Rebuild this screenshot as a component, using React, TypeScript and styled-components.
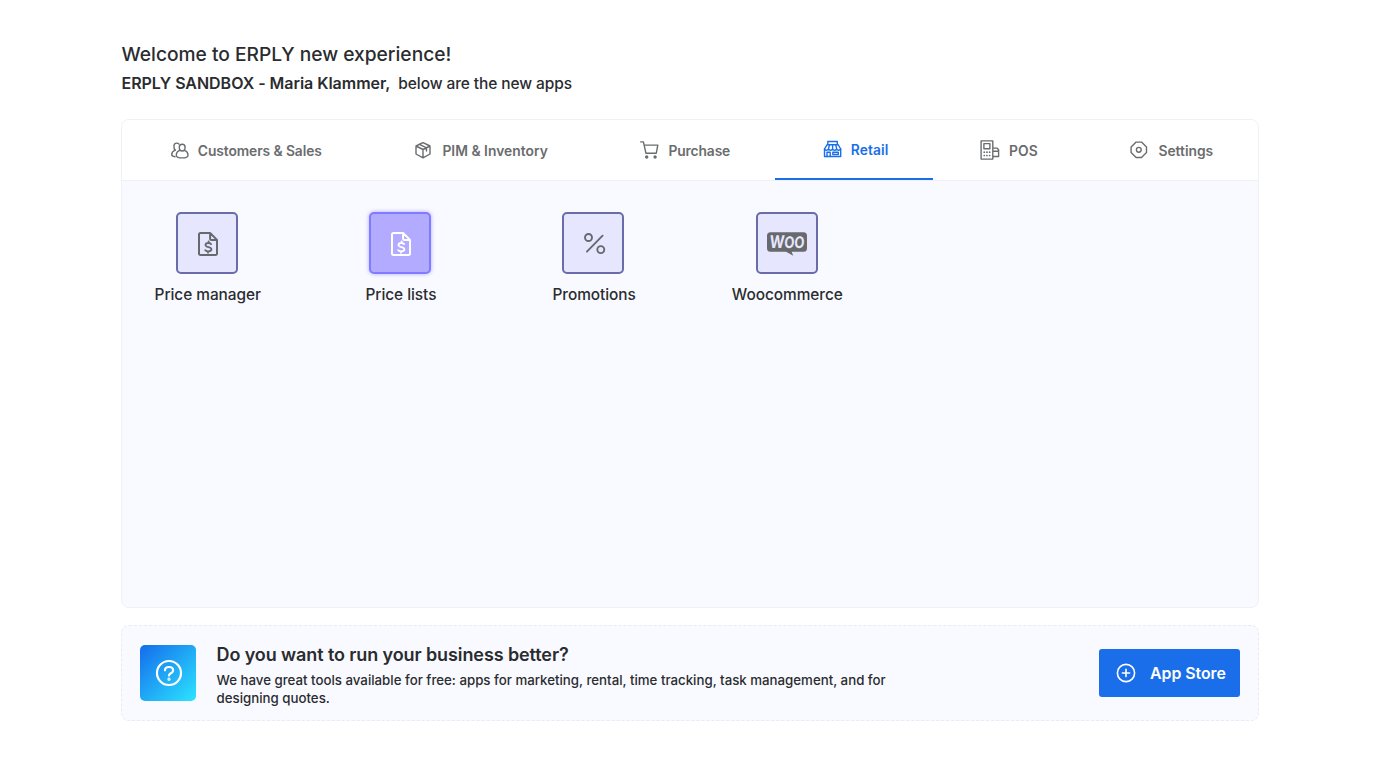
import React from 'react';
import styled, { createGlobalStyle, css } from 'styled-components';

const GlobalStyle = createGlobalStyle`
  *, *::before, *::after { box-sizing: border-box; }
  body {
    margin: 0;
    background: #fff;
    color: #2a2c2f;
    font-family: Inter, 'Liberation Sans', sans-serif;
  }
  h1, h2, p { margin: 0; }
  svg { display: block; flex: none; overflow: visible; }
`;

const Page = styled.main`
  display: flex;
  flex-direction: column;
  width: 1259px;
  padding: 40px 0 0 121px;
`;

const Header = styled.header`
  display: flex;
  flex-direction: column;
  gap: 3px;
  height: 79px;
  padding-left: 0.5px;
`;

const Welcome = styled.h1`
  font-size: 19.2px;
  font-weight: 450;
  line-height: 28px;
`;

const Account = styled.p`
  display: flex;
  align-items: baseline;
  gap: 8px;
  font-size: 15.5px;
  font-weight: 500;
  line-height: 24px;
  letter-spacing: -0.1px;

  strong {
    font-size: 16px;
    font-weight: 600;
    letter-spacing: -0.03px;
  }
`;

const Panel = styled.section`
  display: flex;
  flex-direction: column;
  height: 489px;
  border: 1px solid #f0f1f5;
  border-radius: 8px;
  background: #f9faff;
  overflow: hidden;
`;

const Tabs = styled.nav`
  display: flex;
  height: 61px;
  background: #fff;
  border-bottom: 1px solid #f0f1f5;
`;

const Tab = styled.button<{ $active?: boolean; $tracking?: number }>`
  display: flex;
  flex: 1 1 auto;
  align-items: center;
  justify-content: center;
  gap: 8px;
  padding: 2px 0 0 3px;
  border: 0;
  background: none;
  color: #6a6c6e;
  font: 600 13.8px/20px Inter, 'Liberation Sans', sans-serif;
  letter-spacing: ${p => p.$tracking ?? 0}px;
  white-space: nowrap;

  ${p => p.$active && css`
    color: #1a6fe8;
    padding-bottom: 0;
    border-bottom: 2px solid #1a6fe8;
  `}
`;

const TabIcon = styled.svg`
  width: 20px;
  height: 20px;
  margin-top: -2px;
  fill: none;
  stroke: currentColor;
  stroke-width: 1.4;
  stroke-linecap: round;
  stroke-linejoin: round;
`;

const AppGrid = styled.div`
  display: grid;
  grid-template-columns: repeat(4, 110px);
  column-gap: 83.2px;
  padding: 31px 0 0 30px;
`;

const AppItem = styled.div`
  display: flex;
  flex-direction: column;
  align-items: center;
  gap: 9px;
  font-size: 15.4px;
  font-weight: 500;
  line-height: 24px;
  letter-spacing: -0.04px;
  white-space: nowrap;
`;

const AppLabel = styled.span`
  padding-left: 1.5px;
`;

const Tile = styled.div<{ $active?: boolean }>`
  display: flex;
  align-items: center;
  justify-content: center;
  width: 62px;
  height: 62px;
  padding: 1px 0 0 1px;
  border: 2px solid #6a6ca9;
  border-radius: 5px;
  background: #e6e6ff;
  color: #67696c;

  ${p => p.$active && css`
    border-color: #837bff;
    background: #b2abff;
    color: #fff;
    box-shadow: 0 0 4px rgba(124, 116, 255, 0.6);
  `}
`;

const Banner = styled.section`
  display: flex;
  align-items: center;
  height: 96px;
  margin-top: 17px;
  padding: 0 18px;
  border: 1px dashed #e9ebf3;
  border-radius: 8px;
  background: #f9faff;
`;

const HelpBadge = styled.div`
  display: flex;
  flex: none;
  align-items: center;
  justify-content: center;
  width: 56px;
  height: 56px;
  margin-bottom: 1px;
  padding-left: 1px;
  border-radius: 5px;
  background: linear-gradient(135deg, #146cec 0%, #2ce4ff 100%);
`;

const BannerCopy = styled.div`
  display: flex;
  flex-direction: column;
  gap: 4px;
  width: 684px;
  margin-left: 20.5px;
  padding-top: 4px;
`;

const BannerTitle = styled.h2`
  font-size: 18px;
  font-weight: 600;
  line-height: 24px;
  letter-spacing: -0.1px;
`;

const BannerText = styled.p`
  font-size: 13.28px;
  font-weight: 500;
  line-height: 18.5px;
`;

const StoreButton = styled.button`
  display: flex;
  align-items: center;
  gap: 14px;
  width: 141px;
  height: 48px;
  margin-bottom: 1px;
  margin-left: auto;
  padding: 2px 0 0 17px;
  border: 0;
  border-radius: 3px;
  background: #1a6ee9;
  color: #fff;
  font: 600 15.9px/24px Inter, 'Liberation Sans', sans-serif;
  letter-spacing: -0.05px;
  white-space: nowrap;

  svg { margin-top: -2px; }
`;

const CustomersIcon = () => (
  <TabIcon viewBox="0 -0.5 20 20">
    <path d="M5.200 9.600C4 8.600 3.800 6.900 4 5c.2-1.700 1.300-2.400 2.700-2.400 1 0 1.800.3 2.300 1" />
    <path d="M5.200 9.600C3.200 10.400 1.700 12 1.700 14c0 1.300 1.200 2 3.300 2.200" />
    <path d="M12.200 3.800c2 0 2.900 1.100 2.900 3 0 2-1 3.700-2.900 3.700S9.300 8.800 9.300 6.800c0-1.900.9-3 2.900-3z" />
    <path d="M9.900 9.900C7.700 10.600 6.300 12.500 6.300 14.700c0 1.800 2.400 2.700 5.800 2.700s5.900-.9 5.900-2.700c0-2.200-1.500-4.100-3.700-4.800" />
  </TabIcon>
);

const BoxIcon = () => (
  <TabIcon viewBox="0.5 0 20 20">
    <path d="M9.500 2.600 16.500 6v8L9.500 17.800 2.500 14V6zM2.500 6l7 3.500 7-3.500M9.500 9.500v8.300M6 4.300l7 3.500v3.300" />
  </TabIcon>
);

const CartIcon = () => (
  <TabIcon viewBox="0.6 -0.3 20 20">
    <path d="M1.300 1.600h2.700l2.500 11.300h10.400L18.400 4.800H4.700" />
    <circle cx="7.300" cy="16.700" r="1" fill="currentColor" />
    <circle cx="15.700" cy="16.700" r="1" fill="currentColor" />
  </TabIcon>
);

const RetailIcon = () => (
  <TabIcon viewBox="0.2 -0.2 20 20">
    <path d="M5 5.500V2.300h9.500v3.200M4.300 5.500h11l2.600 4.300v7.500H1.700V9.800z" />
    <path d="M1.700 9.800c.4 1.600 3.400 1.600 4 0 .6 1.600 3.500 1.600 4.100 0 .6 1.600 3.500 1.600 4.100 0 .6 1.600 3.600 1.600 4 0M6.600 5.700 5.700 9.800M9.800 5.700v4.100M13 5.700l.9 4.100" />
    <path d="M4.200 17.300v-4.200h3.200v4.200M10 13.100h5.500v2.200H10z" />
  </TabIcon>
);

const PosIcon = () => (
  <TabIcon viewBox="1 0 20 20">
    <path d="M1.100.9h11.700v18.200H1.100zM3.900 3.600h6v5.200h-6zM12.800 8.100h4.100l1.700 1.700v6.700h-5.800M13 11.300h5.500" />
    <path d="M4.200 12.200h.1M6.900 12.200h.1M9.600 12.200h.1M4.200 15.500h.1M6.900 15.500h.1M9.600 15.500h.1" strokeWidth="1.700" />
  </TabIcon>
);

const SettingsIcon = () => (
  <TabIcon viewBox="0.3 0 20 20">
    <path d="M6.400 2.100h5.400l5 5v5.400l-5 5H6.400l-5-5V7.100z" />
    <circle cx="9.100" cy="9.800" r="2.400" />
  </TabIcon>
);

const PriceIcon = () => (
  <svg width="22" height="26" viewBox="0 0 22 26" fill="none" stroke="currentColor" strokeWidth="2" strokeLinecap="round" strokeLinejoin="round">
    <path d="M3.500 2h9.600L20 8.900v13.600a1.500 1.500 0 0 1-1.500 1.500h-15A1.500 1.500 0 0 1 2 22.500v-19A1.500 1.500 0 0 1 3.500 2zM13.100 2v5.400A1.500 1.500 0 0 0 14.600 8.900H20" />
    <path d="M14.100 13.100c-.7-.8-1.700-1.100-2.800-1.100-1.600 0-2.800.7-2.800 2 0 3 5.900 1.300 5.900 4.300 0 1.300-1.300 2-3.100 2-1.400 0-2.400-.4-3.100-1.200M11.600 10.300V12M11 20.300v1.500" strokeWidth="1.800" />
  </svg>
);

const PercentIcon = () => (
  <svg width="24" height="24" viewBox="0 0 24 24" fill="none" stroke="currentColor" strokeWidth="1.900" strokeLinecap="round">
    <circle cx="6.500" cy="5.500" r="3.500" />
    <circle cx="18.800" cy="17.600" r="3.500" />
    <path d="M20.600 3.700 4.900 19.600" />
  </svg>
);

const WooIcon = () => (
  <svg width="40" height="24" viewBox="0 0 40 24">
    <path d="M3.500.2h33A3.500 3.500 0 0 1 40 3.700v12.600a3.500 3.500 0 0 1-3.500 3.500H24.600l1.700 4-7.200-4H3.500A3.500 3.500 0 0 1 0 16.300V3.700A3.500 3.500 0 0 1 3.500.2z" fill="currentColor" />
    <text
      x="2"
      y="16.300"
      textLength="35"
      lengthAdjust="spacingAndGlyphs"
      fill="#e6e6ff"
      fontFamily="Inter, 'Liberation Sans', sans-serif"
      fontSize="17.500"
      fontWeight="750"
      transform="translate(1.300 0) skewX(-4)"
    >
      W<tspan fontSize="16">OO</tspan>
    </text>
  </svg>
);

const HelpIcon = () => (
  <svg width="28" height="28" viewBox="0 0 28 28" fill="none" stroke="#fff" strokeWidth="2.200" strokeLinecap="round" strokeLinejoin="round">
    <circle cx="14" cy="14" r="12" />
    <path d="M10 11.300C10 9.200 11.700 8 14 8s4.100 1.300 4.100 3.400c0 2.700-4.100 2.900-4.100 5.200" />
    <circle cx="14" cy="20.200" r=".5" fill="#fff" />
  </svg>
);

const PlusIcon = () => (
  <svg width="20" height="20" viewBox="0 0 20 20" fill="none" stroke="#fff" strokeWidth="1.600" strokeLinecap="round">
    <circle cx="10" cy="10" r="8.600" />
    <path d="M10 6.400v7.200M6.400 10h7.200" />
  </svg>
);

const tabs = [
  { label: 'Customers & Sales', icon: <CustomersIcon />, tracking: -0.08 },
  { label: 'PIM & Inventory', icon: <BoxIcon />, tracking: 0.03 },
  { label: 'Purchase', icon: <CartIcon />, tracking: -0.12 },
  { label: 'Retail', icon: <RetailIcon />, tracking: 0.1, active: true },
  { label: 'POS', icon: <PosIcon />, tracking: 0.1 },
  { label: 'Settings', icon: <SettingsIcon />, tracking: 0 },
];

const apps = [
  { label: 'Price manager', icon: <PriceIcon /> },
  { label: 'Price lists', icon: <PriceIcon />, active: true },
  { label: 'Promotions', icon: <PercentIcon /> },
  { label: 'Woocommerce', icon: <WooIcon /> },
];

export default function App() {
  return (
    <>
      <GlobalStyle />
      <Page>
        <Header>
          <Welcome>Welcome to ERPLY new experience!</Welcome>
          <Account>
            <strong>ERPLY SANDBOX - Maria Klammer,</strong>
            <span>below are the new apps</span>
          </Account>
        </Header>
        <Panel>
          <Tabs>
            {tabs.map(tab => (
              <Tab key={tab.label} $active={tab.active} $tracking={tab.tracking}>
                {tab.icon}
                <span>{tab.label}</span>
              </Tab>
            ))}
          </Tabs>
          <AppGrid>
            {apps.map(app => (
              <AppItem key={app.label}>
                <Tile $active={app.active}>{app.icon}</Tile>
                <AppLabel>{app.label}</AppLabel>
              </AppItem>
            ))}
          </AppGrid>
        </Panel>
        <Banner>
          <HelpBadge><HelpIcon /></HelpBadge>
          <BannerCopy>
            <BannerTitle>Do you want to run your business better?</BannerTitle>
            <BannerText>
              We have great tools available for free: apps for marketing, rental, time tracking, task management, and for designing quotes.
            </BannerText>
          </BannerCopy>
          <StoreButton>
            <PlusIcon />
            <span>App Store</span>
          </StoreButton>
        </Banner>
      </Page>
    </>
  );
}
